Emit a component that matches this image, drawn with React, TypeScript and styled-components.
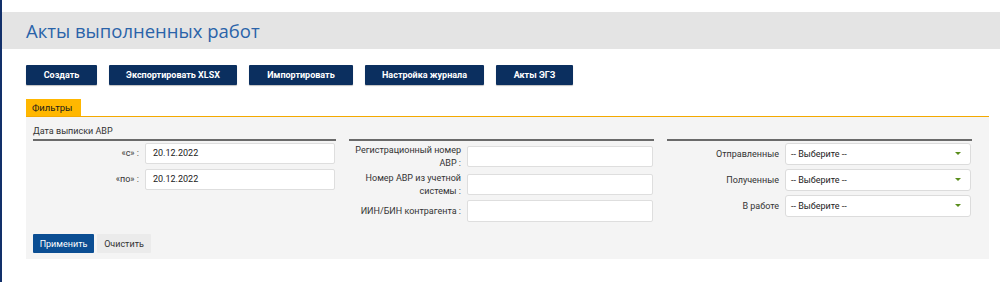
import React from "react";
import styled, { createGlobalStyle } from "styled-components";

const GlobalStyle = createGlobalStyle`
  html, body { margin: 0; padding: 0; background: #ffffff; }
  body { font-family: Roboto, "Liberation Sans", Arial, sans-serif; }
  * { box-sizing: border-box; }
`;

const Page = styled.div`
  min-height: 282px;
  border-left: 2px solid #12306a;
  padding-top: 12px;
`;

const Header = styled.div`
  height: 37px;
  background: #e4e4e4;
  display: flex;
  align-items: center;
  padding-left: 24px;
`;

const Title = styled.h1`
  margin: 0;
  font-family: "Open Sans", "Noto Sans", sans-serif;
  font-weight: 400;
  font-size: 18.5px;
  color: #2a63a9;
`;

const Toolbar = styled.div`
  display: flex;
  gap: 12px;
  margin-top: 16px;
  padding-left: 24px;
`;

const NavButton = styled.button<{ $w: number }>`
  width: ${(p) => p.$w}px;
  height: 20px;
  border: none;
  border-radius: 1px;
  background: #0b2f5f;
  color: #ffffff;
  font-family: Roboto, sans-serif;
  font-weight: 700;
  font-size: 9px;
  box-shadow: 0 1px 1px rgba(0, 0, 0, 0.25);
  padding: 0;
`;

const FilterArea = styled.div`
  margin: 14px 11px 0 24px;
`;

const TabBar = styled.div`
  display: flex;
  border-bottom: 1px solid #f4a900;
`;

const Tab = styled.div`
  width: 55px;
  height: 17px;
  background: #ffb700;
  color: #1a1a1a;
  font-size: 9.5px;
  line-height: 17px;
  padding-left: 6px;
`;

const Panel = styled.div`
  background: #f4f4f4;
  padding: 0 0 6px 7px;
`;

const Columns = styled.div`
  display: grid;
  grid-template-columns: 303px 305px 305px;
  column-gap: 13px;
`;

const Column = styled.div`
  display: flex;
  flex-direction: column;
`;

const SectionHead = styled.div`
  margin-top: 7px;
  height: 15px;
  font-size: 9px;
  line-height: 14px;
  color: #333;
  border-bottom: 2px solid #6a6a6a;
  box-sizing: content-box;
`;

const Rows = styled.div<{ $gap: number; $top: number }>`
  display: flex;
  flex-direction: column;
  gap: ${(p) => p.$gap}px;
  margin-top: ${(p) => p.$top}px;
`;

const Row = styled.div<{ $label: number }>`
  display: grid;
  grid-template-columns: ${(p) => p.$label}px 1fr;
  column-gap: 6px;
  align-items: center;
`;

const Label = styled.label`
  text-align: right;
  font-size: 9px;
  line-height: 12.5px;
  color: #333;
`;

const TextInput = styled.div<{ $h: number }>`
  height: ${(p) => p.$h}px;
  background: #ffffff;
  border: 1px solid #dedede;
  border-radius: 2px;
  font-size: 9px;
  line-height: ${(p) => p.$h - 2}px;
  padding-left: 7px;
  color: #222;
  margin-right: 1px;
`;

const Select = styled.div`
  position: relative;
  height: 22px;
  background: #ffffff;
  border: 1px solid #dcdcdc;
  border-radius: 3px;
  font-size: 9px;
  line-height: 20px;
  padding-left: 5px;
  color: #222;
  margin-right: 1px;
`;

const Caret = styled.span`
  position: absolute;
  right: 9px;
  top: 8px;
  width: 0;
  height: 0;
  border-left: 3px solid transparent;
  border-right: 3px solid transparent;
  border-top: 3px solid #5a8e1d;
`;

const Actions = styled.div`
  display: flex;
  gap: 3px;
  margin-top: 12px;
`;

const ActionButton = styled.button<{ $primary?: boolean; $w: number }>`
  width: ${(p) => p.$w}px;
  height: 19px;
  border: none;
  border-radius: 1px;
  padding: 0;
  font-family: Roboto, sans-serif;
  font-size: 9px;
  background: ${(p) => (p.$primary ? "#0b4e93" : "#ebebeb")};
  color: ${(p) => (p.$primary ? "#ffffff" : "#333333")};
`;

const buttons: [string, number][] = [
  ["Создать", 71],
  ["Экспортировать XLSX", 128],
  ["Импортировать", 104],
  ["Настройка журнала", 119],
  ["Акты ЭГЗ", 77],
];

export default function App() {
  return (
    <>
      <GlobalStyle />
      <Page>
        <Header>
          <Title>Акты выполненных работ</Title>
        </Header>
        <Toolbar>
          {buttons.map(([t, w]) => (
            <NavButton key={t} $w={w}>
              {t}
            </NavButton>
          ))}
        </Toolbar>
        <FilterArea>
          <TabBar>
            <Tab>Фильтры</Tab>
          </TabBar>
          <Panel>
            <Columns>
              <Column>
                <SectionHead>Дата выписки АВР</SectionHead>
                <Rows $gap={5} $top={2}>
                  <Row $label={106}>
                    <Label>«с» :</Label>
                    <TextInput $h={21}>20.12.2022</TextInput>
                  </Row>
                  <Row $label={106}>
                    <Label>«по» :</Label>
                    <TextInput $h={21}>20.12.2022</TextInput>
                  </Row>
                </Rows>
              </Column>
              <Column>
                <SectionHead />
                <Rows $gap={3} $top={3}>
                  <Row $label={112}>
                    <Label>Регистрационный номер АВР :</Label>
                    <TextInput $h={21} />
                  </Row>
                  <Row $label={112}>
                    <Label>Номер АВР из учетной системы :</Label>
                    <TextInput $h={21} />
                  </Row>
                  <Row $label={112}>
                    <Label>ИИН/БИН контрагента :</Label>
                    <TextInput $h={22} />
                  </Row>
                </Rows>
              </Column>
              <Column>
                <SectionHead />
                <Rows $gap={4} $top={2}>
                  {["Отправленные", "Полученные", "В работе"].map((l) => (
                    <Row key={l} $label={112}>
                      <Label>{l}</Label>
                      <Select>
                        -- Выберите --
                        <Caret />
                      </Select>
                    </Row>
                  ))}
                </Rows>
              </Column>
            </Columns>
            <Actions>
              <ActionButton $primary $w={61}>
                Применить
              </ActionButton>
              <ActionButton $w={54}>Очистить</ActionButton>
            </Actions>
          </Panel>
        </FilterArea>
      </Page>
    </>
  );
}
